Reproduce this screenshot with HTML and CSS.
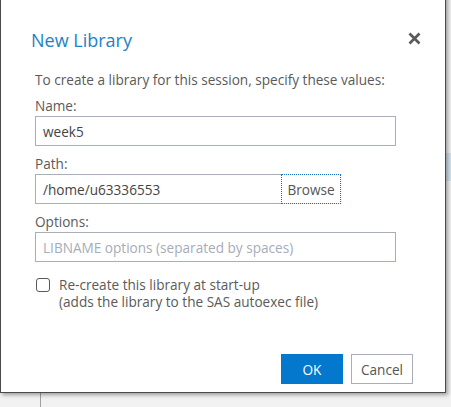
FILE: index.html
```html
<!DOCTYPE html>
<html>
<head>
<meta charset="utf-8">
<link rel="stylesheet" href="styles.css">
</head>
<body>
<div class="backdrop">
  <div class="left-pane"></div>
  <div class="main-pane"><div class="selected-row"></div></div>
</div>
<div class="dialog">
  <div class="header">
    <h1 class="title">New Library</h1>
    <svg class="close" width="13" height="13" viewBox="0 0 13 13"><path d="M1.5 1.5 L11.5 11.5 M11.5 1.5 L1.5 11.5" stroke="#5a5a5a" stroke-width="2.7" stroke-linecap="butt"/></svg>
  </div>
  <p class="intro">To create a library for this session, specify these values:</p>
  <label class="label">Name:</label>
  <div class="field wide"><span class="value">week5</span></div>
  <label class="label">Path:</label>
  <div class="path-row">
    <div class="field path"><span class="value">/home/u63336553</span></div>
    <div class="browse">Browse</div>
  </div>
  <label class="label">Options:</label>
  <div class="field wide"><span class="placeholder">LIBNAME options (separated by spaces)</span></div>
  <div class="check-row">
    <span class="checkbox"></span>
    <div class="check-text">
      <div class="check-line">Re-create this library at start-up</div>
      <div class="check-line">(adds the library to the SAS autoexec file)</div>
    </div>
  </div>
  <div class="buttons">
    <div class="btn ok">OK</div>
    <div class="btn cancel">Cancel</div>
  </div>
</div>
</body>
</html>
```
FILE: styles.css
```css
html, body {
  margin: 0;
  padding: 0;
  width: 451px;
  height: 407px;
  overflow: hidden;
  font-family: "Open Sans", "Noto Sans", sans-serif;
}
.backdrop {
  display: flex;
  width: 451px;
  height: 407px;
  background: #f2f2f2;
}
.left-pane {
  width: 40px;
  border-right: 1px solid #a0a0a0;
  background: #f2f2f2;
}
.main-pane {
  flex: 1;
  padding-top: 153px;
}
.selected-row {
  height: 28px;
  background: #d5e3ee;
}
.dialog {
  position: absolute;
  left: 0;
  top: -10px;
  width: 444px;
  height: 401px;
  background: #fff;
  border: 1px solid #4a4a4a;
  box-shadow: 2px 2px 4px rgba(0,0,0,0.35);
  box-sizing: content-box;
  color: #585858;
}
.header {
  display: flex;
  justify-content: space-between;
  align-items: center;
  padding: 37px 24px 0 30px;
  height: 24px;
}
.title {
  margin: 0;
  font-size: 18px;
  font-weight: 400;
  line-height: 24px;
  color: #1d82c8;
}
.close {
  display: block;
  margin-top: -4px;
}
.intro {
  margin: 19px 0 0 34px;
  font-size: 13.6px;
  line-height: 18px;
  color: #5a5a5a;
}
.label {
  display: block;
  margin: 8px 0 1px 34px;
  font-size: 13.6px;
  line-height: 18px;
  color: #5a5a5a;
}
.field + .label, .path-row + .label {
  margin-top: 9px;
}
.field {
  box-sizing: border-box;
  height: 30px;
  border: 1px solid #a9aeb8;
  padding: 0 7px;
  display: flex;
  align-items: center;
  font-size: 13.6px;
}
.wide {
  width: 361px;
  margin-left: 34px;
}
.value { color: #444; }
.placeholder { color: #a6acb8; }
.path-row {
  display: flex;
  margin-left: 34px;
}
.path {
  width: 246px;
  border-right: none;
}
.browse {
  box-sizing: border-box;
  width: 60px;
  height: 30px;
  border: 1px dotted #1a6fc0;
  display: flex;
  align-items: center;
  justify-content: center;
  font-size: 13.6px;
  color: #555;
}
.check-row {
  display: flex;
  align-items: flex-start;
  margin: 16px 0 0 35px;
}
.checkbox {
  box-sizing: border-box;
  width: 14px;
  height: 14px;
  border: 1px solid #5a5a5a;
  border-radius: 3px;
  flex: none;
}
.check-text {
  margin-left: 9px;
  margin-top: -2px;
  font-size: 13.6px;
  color: #5a5a5a;
}
.check-line {
  line-height: 17px;
}
.buttons {
  display: flex;
  justify-content: flex-end;
  gap: 8px;
  margin: 44px 32px 0 0;
}
.btn {
  box-sizing: border-box;
  width: 62px;
  height: 30px;
  display: flex;
  align-items: center;
  justify-content: center;
  font-size: 13.6px;
}
.ok {
  background: #0378cd;
  color: #fff;
}
.cancel {
  border: 1px solid #a9aeb8;
  color: #555;
}
```
